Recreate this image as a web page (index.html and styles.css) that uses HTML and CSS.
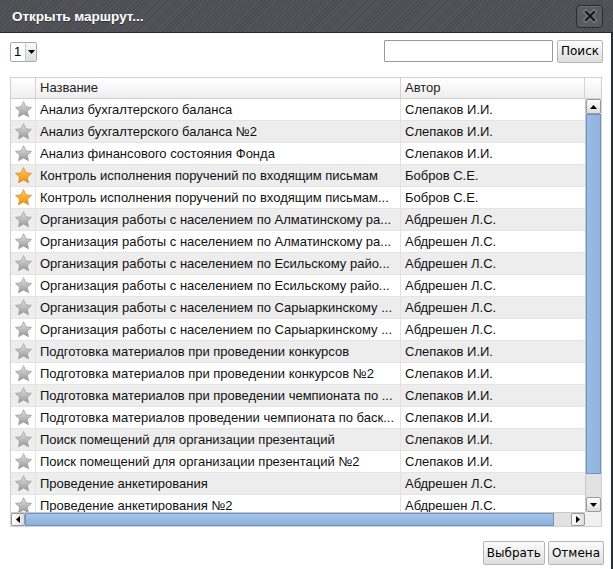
FILE: index.html
```html
<!DOCTYPE html>
<html lang="ru">
<head>
<meta charset="utf-8">
<title>Открыть маршрут...</title>
<link rel="stylesheet" href="styles.css">
</head>
<body>
<svg width="0" height="0" class="defs">
  <defs>
    <linearGradient id="gstar" x1="0" y1="0" x2="0" y2="1">
      <stop offset="0" stop-color="#e2e2e2"/>
      <stop offset="1" stop-color="#999999"/>
    </linearGradient>
    <linearGradient id="ostar" x1="0" y1="0" x2="0" y2="1">
      <stop offset="0" stop-color="#ffd25a"/>
      <stop offset="1" stop-color="#f08a10"/>
    </linearGradient>
    <symbol id="star" viewBox="0 0 16 16">
      <polygon points="8,0.6 10.3,5.4 15.5,6 11.6,9.6 12.7,14.8 8,12.2 3.3,14.8 4.4,9.6 0.5,6 5.7,5.4"/>
    </symbol>
  </defs>
</svg>
<div class="dialog">
  <div class="titlebar">
    <span class="title">Открыть маршрут...</span>
    <span class="close">
      <svg width="14" height="14" viewBox="0 0 14 14">
        <path d="M3 3 L11 11 M11 3 L3 11" stroke="#8a8c90" stroke-width="4.5" stroke-linecap="square"/>
        <path d="M3 3 L11 11 M11 3 L3 11" stroke="#1e1f22" stroke-width="2.5" stroke-linecap="square"/>
      </svg>
    </span>
  </div>
  <div class="toolbar">
    <span class="select"><span class="sel-val">1</span><span class="sel-arrow"><svg width="7" height="4" viewBox="0 0 7 4"><polygon points="0,0 7,0 3.5,4" fill="#000"/></svg></span></span>
    <span class="spacer"></span>
    <input class="search" type="text">
    <button class="btn">Поиск</button>
  </div>
  <div class="grid">
    <div class="grid-head">
      <div class="hc c-star"></div>
      <div class="hc c-name">Название</div>
      <div class="hc c-auth">Автор</div>
      <div class="hc c-fill"></div>
    </div>
    <div class="grid-main">
      <div class="viewport">
        <div class="row"><div class="cell c-star"><svg class="st g"><use href="#star"/></svg></div><div class="cell c-name">Анализ бухгалтерского баланса</div><div class="cell c-auth">Слепаков И.И.</div></div>
        <div class="row"><div class="cell c-star"><svg class="st g"><use href="#star"/></svg></div><div class="cell c-name">Анализ бухгалтерского баланса №2</div><div class="cell c-auth">Слепаков И.И.</div></div>
        <div class="row"><div class="cell c-star"><svg class="st g"><use href="#star"/></svg></div><div class="cell c-name">Анализ финансового состояния Фонда</div><div class="cell c-auth">Слепаков И.И.</div></div>
        <div class="row"><div class="cell c-star"><svg class="st o"><use href="#star"/></svg></div><div class="cell c-name">Контроль исполнения поручений по входящим письмам</div><div class="cell c-auth">Бобров С.Е.</div></div>
        <div class="row"><div class="cell c-star"><svg class="st o"><use href="#star"/></svg></div><div class="cell c-name">Контроль исполнения поручений по входящим письмам...</div><div class="cell c-auth">Бобров С.Е.</div></div>
        <div class="row"><div class="cell c-star"><svg class="st g"><use href="#star"/></svg></div><div class="cell c-name">Организация работы с населением по Алматинскому ра...</div><div class="cell c-auth">Абдрешен Л.С.</div></div>
        <div class="row"><div class="cell c-star"><svg class="st g"><use href="#star"/></svg></div><div class="cell c-name">Организация работы с населением по Алматинскому ра...</div><div class="cell c-auth">Абдрешен Л.С.</div></div>
        <div class="row"><div class="cell c-star"><svg class="st g"><use href="#star"/></svg></div><div class="cell c-name">Организация работы с населением по Есильскому райо...</div><div class="cell c-auth">Абдрешен Л.С.</div></div>
        <div class="row"><div class="cell c-star"><svg class="st g"><use href="#star"/></svg></div><div class="cell c-name">Организация работы с населением по Есильскому райо...</div><div class="cell c-auth">Абдрешен Л.С.</div></div>
        <div class="row"><div class="cell c-star"><svg class="st g"><use href="#star"/></svg></div><div class="cell c-name">Организация работы с населением по Сарыаркинскому ...</div><div class="cell c-auth">Абдрешен Л.С.</div></div>
        <div class="row"><div class="cell c-star"><svg class="st g"><use href="#star"/></svg></div><div class="cell c-name">Организация работы с населением по Сарыаркинскому ...</div><div class="cell c-auth">Абдрешен Л.С.</div></div>
        <div class="row"><div class="cell c-star"><svg class="st g"><use href="#star"/></svg></div><div class="cell c-name">Подготовка материалов при проведении конкурсов</div><div class="cell c-auth">Слепаков И.И.</div></div>
        <div class="row"><div class="cell c-star"><svg class="st g"><use href="#star"/></svg></div><div class="cell c-name">Подготовка материалов при проведении конкурсов №2</div><div class="cell c-auth">Слепаков И.И.</div></div>
        <div class="row"><div class="cell c-star"><svg class="st g"><use href="#star"/></svg></div><div class="cell c-name">Подготовка материалов при проведении чемпионата по ...</div><div class="cell c-auth">Слепаков И.И.</div></div>
        <div class="row"><div class="cell c-star"><svg class="st g"><use href="#star"/></svg></div><div class="cell c-name">Подготовка материалов проведении чемпионата по баск...</div><div class="cell c-auth">Слепаков И.И.</div></div>
        <div class="row"><div class="cell c-star"><svg class="st g"><use href="#star"/></svg></div><div class="cell c-name">Поиск помещений для организации презентаций</div><div class="cell c-auth">Слепаков И.И.</div></div>
        <div class="row"><div class="cell c-star"><svg class="st g"><use href="#star"/></svg></div><div class="cell c-name">Поиск помещений для организации презентаций №2</div><div class="cell c-auth">Слепаков И.И.</div></div>
        <div class="row"><div class="cell c-star"><svg class="st g"><use href="#star"/></svg></div><div class="cell c-name">Проведение анкетирования</div><div class="cell c-auth">Абдрешен Л.С.</div></div>
        <div class="row"><div class="cell c-star"><svg class="st g"><use href="#star"/></svg></div><div class="cell c-name">Проведение анкетирования №2</div><div class="cell c-auth">Абдрешен Л.С.</div></div>
      </div>
      <div class="vscroll">
        <div class="sbtn"><svg width="7" height="4" viewBox="0 0 7 4"><polygon points="0,4 7,4 3.5,0" fill="#000"/></svg></div>
        <div class="vthumb"></div>
        <div class="vtrack"></div>
        <div class="sbtn"><svg width="7" height="4" viewBox="0 0 7 4"><polygon points="0,0 7,0 3.5,4" fill="#000"/></svg></div>
      </div>
      <div class="hscroll">
        <div class="sbtn h"><svg width="4" height="7" viewBox="0 0 4 7"><polygon points="4,0 4,7 0,3.5" fill="#000"/></svg></div>
        <div class="hthumb"></div>
        <div class="htrack"></div>
        <div class="sbtn h"><svg width="4" height="7" viewBox="0 0 4 7"><polygon points="0,0 0,7 4,3.5" fill="#000"/></svg></div>
      </div>
      <div class="corner"></div>
    </div>
  </div>
  <div class="footer">
    <button class="btn">Выбрать</button>
    <button class="btn">Отмена</button>
  </div>
</div>
</body>
</html>
```

FILE: styles.css
```css
* { box-sizing: border-box; }
html, body { margin: 0; padding: 0; }
body {
  width: 613px;
  height: 569px;
  overflow: hidden;
  background: #fff;
  font-family: "Liberation Sans", Arial, sans-serif;
  font-size: 13px;
  color: #000;
}
.defs { position: absolute; width: 0; height: 0; }
.dialog {
  width: 613px;
  height: 569px;
  border-right: 2px solid #2c2e32;
  display: flex;
  flex-direction: column;
}
.titlebar {
  height: 33px;
  flex: none;
  display: flex;
  align-items: center;
  justify-content: space-between;
  padding: 0 10px 0 12px;
  background-color: #4c4e54;
  background-image: repeating-linear-gradient(135deg, rgba(255,255,255,0.05) 0 1px, rgba(0,0,0,0) 1px 3px);
  border-bottom: 1px solid #26282b;
  margin-right: -2px;
}
.title {
  color: #fff;
  font-weight: bold;
  font-size: 13.5px;
  text-shadow: 0 1px 0 rgba(0,0,0,0.4);
}
.close {
  width: 27px;
  height: 23px;
  border: 1px solid #2a2b2e;
  border-radius: 4px;
  background: #5a5c62;
  box-shadow: inset 0 1px 0 rgba(255,255,255,0.12);
  display: flex;
  align-items: center;
  justify-content: center;
}
.toolbar {
  display: flex;
  align-items: center;
  padding: 6px 8px 0 10px;
  height: 30px;
  flex: none;
}
.select {
  display: flex;
  align-items: stretch;
  width: 27px;
  height: 20px;
  border: 1px solid #a8a8a8;
  border-radius: 2px;
  background: #fff;
  margin-top: 2px;
}
.sel-val {
  flex: 1;
  padding-left: 3px;
  line-height: 18px;
  font-size: 13px;
}
.sel-arrow {
  width: 11px;
  display: flex;
  align-items: center;
  justify-content: center;
  background: linear-gradient(#fafafa, #dcdcdc);
  border-left: 1px solid #c8c8c8;
  border-radius: 0 1px 1px 0;
}
.spacer { flex: 1; }
.search {
  width: 169px;
  height: 22px;
  border: 1px solid #9a9a9a;
  border-radius: 1px;
  margin: 0 4px 0 0;
  padding: 0 3px;
  font-size: 13px;
  font-family: inherit;
}
.btn {
  height: 23px;
  padding: 0 3px;
  border: 1px solid #b4b4b4;
  border-radius: 2px;
  background: linear-gradient(#fbfbfb, #dedede);
  font-family: "DejaVu Sans", Tahoma, sans-serif;
  font-size: 12px;
  color: #000;
  margin: 0;
}
.grid {
  margin: 14px 0 0 10px;
  width: 592px;
  height: 450px;
  border: 1px solid #d0d0d0;
  display: flex;
  flex-direction: column;
  flex: none;
}
.grid-head {
  display: flex;
  height: 21px;
  flex: none;
  background: linear-gradient(#ffffff, #eeeeee);
  border-bottom: 1px solid #d0d0d0;
}
.hc {
  line-height: 20px;
  padding-left: 4px;
  color: #222;
  border-right: 1px solid #d4d4d4;
  white-space: nowrap;
}
.hc.c-fill { border-right: none; flex: 1; }
.c-star { width: 25px; flex: none; }
.c-name { width: 365px; flex: none; }
.c-auth { width: 184px; flex: none; }
.grid-main {
  flex: 1;
  display: grid;
  grid-template-columns: 574px 16px;
  grid-template-rows: 413px 14px;
  overflow: hidden;
}
.viewport {
  overflow: hidden;
}
.row {
  display: flex;
  height: 22px;
  border-bottom: 1px solid #e4e4e4;
  background: #fff;
}
.row:nth-child(even) { background: #ededed; }
.cell {
  line-height: 21px;
  padding-left: 4px;
  white-space: nowrap;
  overflow: hidden;
  border-right: 1px solid #e2e2e2;
  color: #111;
}
.cell.c-auth { border-right: none; }
.cell.c-star {
  padding-left: 0;
  display: flex;
  align-items: center;
  justify-content: center;
}
.st { width: 17px; height: 17px; }
.st.g { fill: url(#gstar); stroke: #909090; stroke-width: 0.6; }
.st.o { fill: url(#ostar); stroke: #d9790c; stroke-width: 0.6; }
.vscroll {
  display: flex;
  flex-direction: column;
  background: #e4e4e4;
  border-left: 1px solid #c8c8c8;
}
.sbtn {
  height: 15px;
  flex: none;
  display: flex;
  align-items: center;
  justify-content: center;
  background: linear-gradient(#fefefe, #dcdcdc);
  border: 1px solid #9a9a9a;
  border-radius: 2px;
}
.sbtn.h {
  width: 14px;
  height: auto;
  background: linear-gradient(90deg, #fefefe, #dcdcdc);
}
.vthumb {
  height: 360px;
  flex: none;
  background: linear-gradient(90deg, #9bbce2, #8fb3de);
  border: 1px solid #6f93c2;
}
.vtrack { flex: 1; background: #e2e2e2; }
.hscroll {
  display: flex;
  background: #e4e4e4;
  border-top: 1px solid #c8c8c8;
}
.hthumb {
  width: 529px;
  flex: none;
  background: linear-gradient(#a6c4e6, #8cb0dc);
  border: 1px solid #6f93c2;
}
.htrack { flex: 1; background: #e2e2e2; }
.corner { background: #f0f0f0; }
.footer {
  display: flex;
  justify-content: flex-end;
  gap: 3px;
  padding: 14px 7px 0 0;
}
.footer .btn { height: 24px; padding: 0 3px; }
```
